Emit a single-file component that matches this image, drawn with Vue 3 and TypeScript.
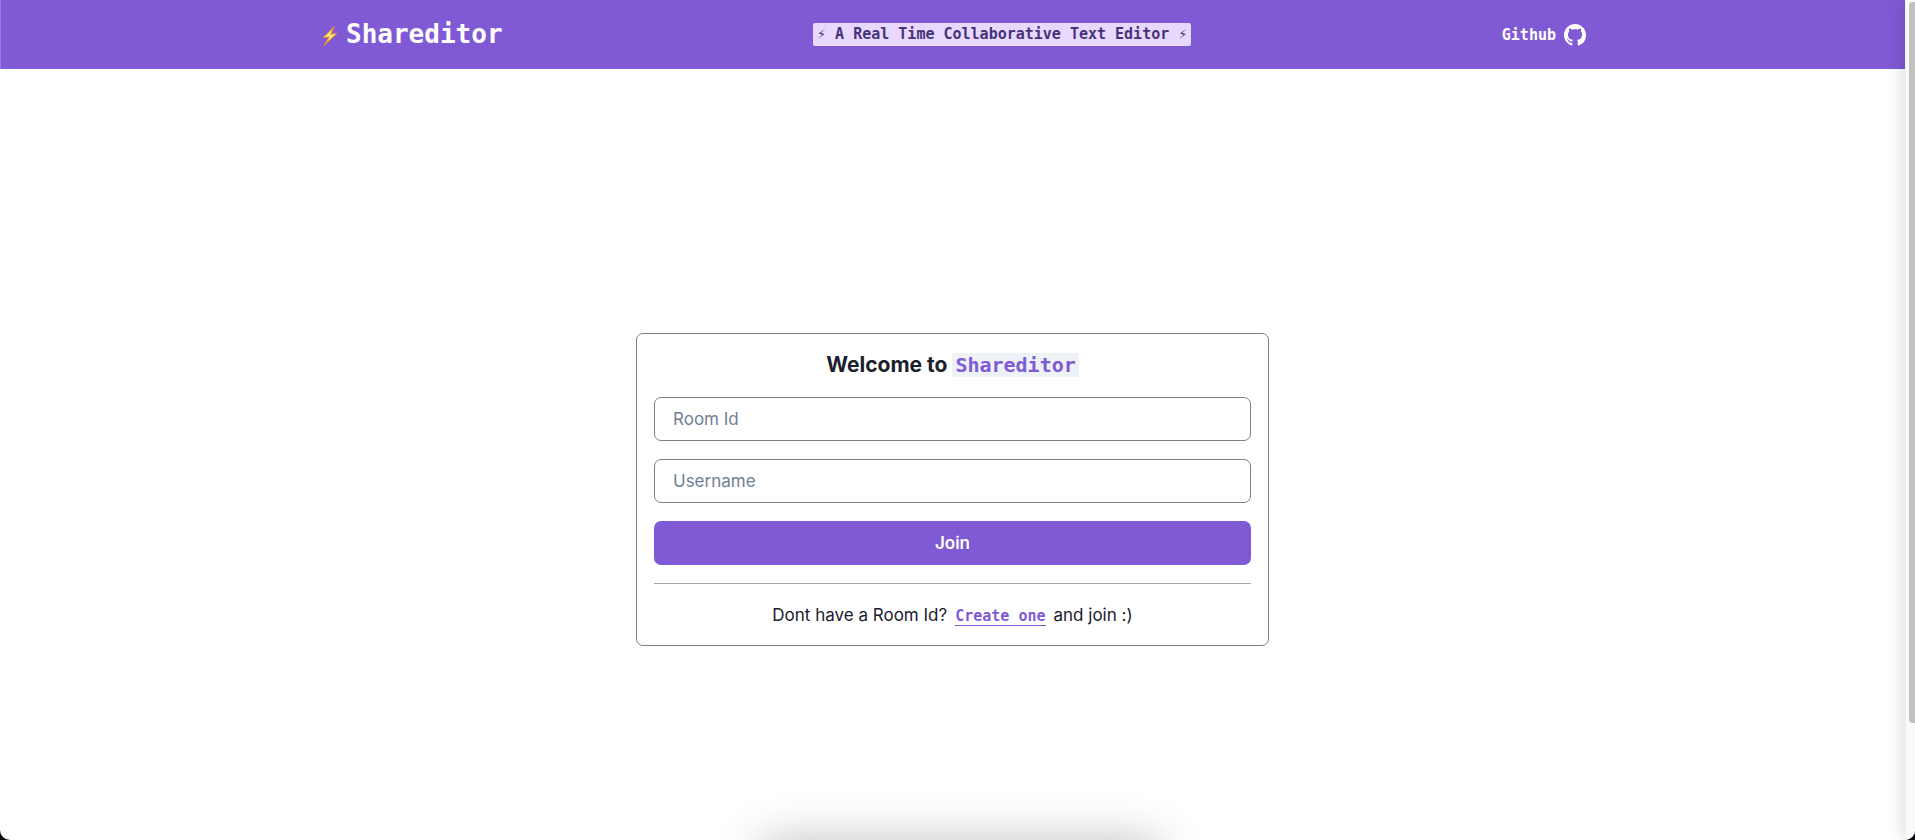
<script setup lang="ts">
import { ref } from 'vue'

const roomId = ref<string>('')
const username = ref<string>('')

function createRoom(): void {
  roomId.value = Math.random().toString(36).slice(2, 10)
}
</script>

<template>
  <div class="window">
    <div class="page">
      <header class="navbar">
        <div class="navbar-inner">
          <a class="brand" href="#">
            <svg class="bolt" viewBox="0 0 16 20" aria-hidden="true">
              <defs>
                <linearGradient id="bolt-fill" x1="0" y1="0" x2="0" y2="1">
                  <stop offset="0" stop-color="#f59a1b" />
                  <stop offset="0.5" stop-color="#ffd84a" />
                  <stop offset="1" stop-color="#f08a12" />
                </linearGradient>
              </defs>
              <path
                d="M12.2 0.5 1.2 11.6 7 11 2 19.5 14.8 7.6 8.8 8.2Z"
                fill="url(#bolt-fill)"
                stroke="#ee971e"
                stroke-width="0.8"
                stroke-linejoin="round"
              />
              <path d="M9.8 4 4 10.4 9 9.8 6 14.4 12.2 8.6 7.2 9.2Z" fill="#fff3a0" />
            </svg>
            <span>Shareditor</span>
          </a>
          <code class="tagline">⚡&#xFE0E; A Real Time Collaborative Text Editor ⚡&#xFE0E;</code>
          <a class="github" href="#">
            <span>Github</span>
            <svg viewBox="0 0 16 16" aria-hidden="true">
              <path
                fill="currentColor"
                d="M8 0C3.58 0 0 3.58 0 8c0 3.54 2.29 6.53 5.47 7.59.4.07.55-.17.55-.38 0-.19-.01-.82-.01-1.49-2.01.37-2.53-.49-2.69-.94-.09-.23-.48-.94-.82-1.13-.28-.15-.68-.52-.01-.53.63-.01 1.08.58 1.23.82.72 1.21 1.87.87 2.33.66.07-.52.28-.87.51-1.07-1.78-.2-3.64-.89-3.64-3.95 0-.87.31-1.59.82-2.15-.08-.2-.36-1.02.08-2.12 0 0 .67-.21 2.2.82.64-.18 1.32-.27 2-.27s1.36.09 2 .27c1.53-1.04 2.2-.82 2.2-.82.44 1.1.16 1.92.08 2.12.51.56.82 1.27.82 2.15 0 3.07-1.87 3.75-3.65 3.95.29.25.54.73.54 1.48 0 1.07-.01 1.93-.01 2.2 0 .21.15.46.55.38A8.01 8.01 0 0 0 16 8c0-4.42-3.58-8-8-8z"
              />
            </svg>
          </a>
        </div>
      </header>

      <main class="content">
        <form class="card" @submit.prevent>
          <h1>Welcome to <code>Shareditor</code></h1>
          <input v-model="roomId" type="text" placeholder="Room Id" aria-label="Room Id" />
          <input v-model="username" type="text" placeholder="Username" aria-label="Username" />
          <button class="join" type="submit">Join</button>
          <hr />
          <p>
            <span>Dont have a Room Id?</span>
            <a class="create" href="#" @click.prevent="createRoom">Create one</a>
            <span>and join :)</span>
          </p>
        </form>
      </main>
    </div>
    <div class="scroll-track"><div class="scroll-thumb"></div></div>
    <div class="dock-shadow"></div>
  </div>
</template>

<style>
body {
  margin: 0;
  background: #0a0a14;
}
</style>

<style scoped>
.window {
  position: relative;
  display: flex;
  height: 100vh;
  overflow: hidden;
  border-radius: 0 0 10px 10px;
  background: #fff;
  color: #1a202c;
  font-family: Inter, "Liberation Sans", sans-serif;
  font-size: 17px;
  line-height: 26px;
}
.window * {
  box-sizing: border-box;
}
.page {
  flex: 1;
  min-width: 0;
}
.navbar {
  background: #805ad5;
  border-left: 1px solid #9b7be0;
}
.navbar-inner {
  display: flex;
  align-items: center;
  justify-content: space-between;
  max-width: 1266px;
  height: 69px;
  margin: 0 auto;
}
a {
  color: inherit;
  text-decoration: none;
}
.brand,
.github,
code,
.create {
  font-family: "DejaVu Sans Mono", "Liberation Mono", monospace;
  font-weight: 700;
}
.brand {
  display: flex;
  align-items: center;
  gap: 8px;
  padding: 0 0 2px 2px;
  color: #fff;
  font-size: 26px;
  line-height: 36px;
}
.bolt {
  width: 16px;
  height: 20px;
  margin-top: 4px;
}
.tagline {
  padding: 0 4px;
  border-radius: 2px;
  background: #e9d8fd;
  color: #44337a;
  font-size: 15px;
  line-height: 23px;
}
.github {
  display: flex;
  align-items: center;
  gap: 8px;
  color: #fff;
  font-size: 15px;
}
.github svg {
  width: 22px;
  height: 22px;
}
.content {
  display: flex;
  align-items: center;
  justify-content: center;
  min-height: 100vh;
}
.card {
  display: flex;
  flex-direction: column;
  gap: 18px;
  width: 633px;
  max-width: 100%;
  padding: 17px;
  border: 1px solid #808080;
  border-radius: 7px;
}
h1 {
  margin: 0;
  font-size: 21px;
  font-weight: 700;
  line-height: 27px;
  text-align: center;
}
h1 code {
  padding: 0 3px;
  border-radius: 2px;
  background: #edf2f7;
  color: #805ad5;
  font-size: 20px;
}
input {
  width: 100%;
  height: 44px;
  padding: 0 18px;
  border: 1px solid #808080;
  border-radius: 7px;
  outline: none;
  background: #fff;
  color: inherit;
  font: inherit;
}
input::placeholder {
  color: #718096;
  opacity: 1;
}
.join {
  height: 44px;
  padding: 0;
  border: 0;
  border-radius: 7px;
  background: #805ad5;
  color: #fff;
  font: inherit;
  font-weight: 600;
  cursor: pointer;
}
hr {
  width: 100%;
  height: 1px;
  margin: 0;
  border: 0;
  background: #a8a8a8;
}
p {
  display: flex;
  align-items: baseline;
  justify-content: center;
  gap: 8px;
  margin: 0;
}
.create {
  border-bottom: 1px solid #805ad5;
  color: #805ad5;
  font-size: 15px;
  line-height: 18px;
}
.scroll-track {
  position: relative;
  display: flex;
  justify-content: flex-end;
  width: 10px;
  padding-top: 2px;
  border-left: 1px solid #f0f0f0;
  background: #fafafa;
  box-shadow: 0 0 18px rgba(0, 0, 0, 0.22);
}
.scroll-thumb {
  width: 6px;
  height: 86%;
  border-radius: 4px 0 0 4px;
  background: #c1c1c1;
}
.dock-shadow {
  position: absolute;
  top: 100%;
  left: 50%;
  width: 400px;
  height: 60px;
  margin-left: -198px;
  border-radius: 16px;
  box-shadow: 0 0 46px rgba(0, 0, 0, 0.25);
}
</style>
